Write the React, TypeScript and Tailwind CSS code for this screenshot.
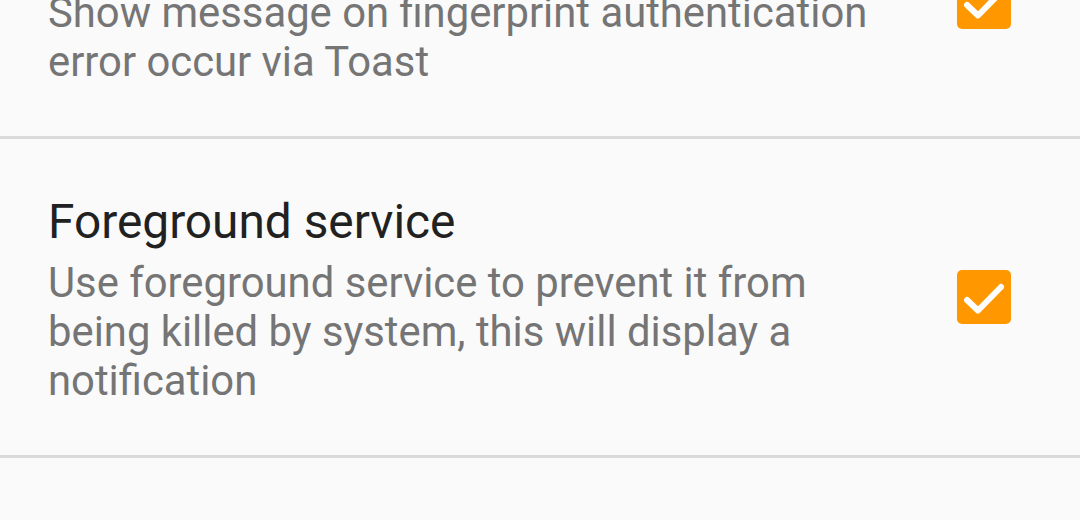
type Pref = {
  title: string
  summary: string
  checked: boolean
}

const prefs: Pref[] = [
  {
    title: 'Toast on error',
    summary: 'Show message on fingerprint authentication error occur via Toast',
    checked: true,
  },
  {
    title: 'Foreground service',
    summary:
      'Use foreground service to prevent it from being killed by system, this will display a notification',
    checked: true,
  },
]

function CheckBox({ checked }: { checked: boolean }) {
  return (
    <div
      className={
        'w-[54px] h-[54px] mb-[6px] rounded-[5px] flex items-center justify-center shrink-0 ' +
        (checked ? 'bg-[#ff9800]' : 'border-[5px] border-[#757575]')
      }
    >
      {checked && (
        <svg viewBox="0 0 54 54" className="w-[54px] h-[54px]" fill="none">
          <path
            d="M10 30 L21 40.5 L44 17"
            stroke="#ffffff"
            strokeWidth="6"
            strokeLinecap="round"
            strokeLinejoin="round"
          />
        </svg>
      )}
    </div>
  )
}

function PrefRow({ pref }: { pref: Pref }) {
  return (
    <div className="flex items-center pl-[48px] pr-[69px] pt-[55px] pb-[50px]">
      <div className="w-[845px] shrink-0">
        <div className="text-[47.8px] leading-[56px] text-[#212121]">{pref.title}</div>
        <div className="mt-[8px] text-[41.8px] leading-[49px] text-[#757575]">{pref.summary}</div>
      </div>
      <div className="flex-1" />
      <CheckBox checked={pref.checked} />
    </div>
  )
}

export default function App() {
  return (
    <div
      className="w-[1080px] h-[520px] overflow-hidden bg-[#fafafa]"
      style={{ fontFamily: 'Roboto, "Noto Sans", sans-serif' }}
    >
      <div className="-mt-[131px]">
        {prefs.map(p => (
          <div key={p.title}>
            <PrefRow pref={p} />
            <div className="h-[3px] bg-[#dadada]" />
          </div>
        ))}
      </div>
    </div>
  )
}
